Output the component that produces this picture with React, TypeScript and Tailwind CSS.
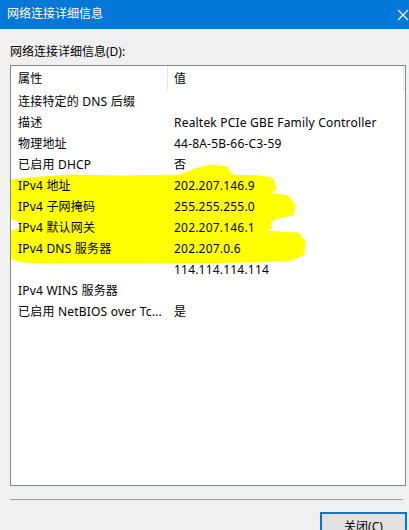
import React from "react";

const font = { fontFamily: '"Noto Sans", "Noto Sans CJK SC", sans-serif' };

const rows: [string, string][] = [
  ["连接特定的 DNS 后缀", ""],
  ["描述", "Realtek PCIe GBE Family Controller"],
  ["物理地址", "44-8A-5B-66-C3-59"],
  ["已启用 DHCP", "否"],
  ["IPv4 地址", "202.207.146.9"],
  ["IPv4 子网掩码", "255.255.255.0"],
  ["IPv4 默认网关", "202.207.146.1"],
  ["IPv4 DNS 服务器", "202.207.0.6"],
  ["", "114.114.114.114"],
  ["IPv4 WINS 服务器", ""],
  ["已启用 NetBIOS over Tc...", "是"],
];

// blob in page coords, converted to list-local (minus 11,66)
const pts: [number, number][] = [
  [11, 181], [40, 178], [70, 176], [120, 177], [180, 176], [198, 169], [212, 166], [226, 168], [232, 176],
  [260, 177], [272, 179], [275, 188], [268, 194], [288, 197], [294, 206], [292, 214], [278, 217], [270, 220],
  [270, 228], [262, 232], [298, 234], [304, 242], [303, 254], [292, 259], [260, 261], [150, 262], [60, 262],
  [24, 261], [11, 258], [11, 232], [22, 229], [24, 222], [11, 218],
];
const d =
  pts.map((p, i) => `${i === 0 ? "M" : "L"}${p[0] - 11} ${p[1] - 66}`).join(" ") + " Z";

export default function App() {
  return (
    <div
      className="w-[409px] h-[530px] bg-[#f0f0f0] overflow-hidden flex flex-col text-[12px] text-black"
      style={font}
    >
      <div className="h-[29px] bg-[#0078d7] flex items-center justify-between pl-[7px] text-white shrink-0">
        <span className="leading-none pb-[1px]">网络连接详细信息</span>
        <svg width="12" height="12" viewBox="0 0 12 12" className="mt-[1px]">
          <path d="M1 1 L11 11 M11 1 L1 11" stroke="white" strokeWidth="1.2" />
        </svg>
      </div>
      <div className="pl-[10px] pt-[15px] flex flex-col">
        <div className="h-[16px] leading-[16px]">网络连接详细信息(D):</div>
        <div className="mt-[5px] w-[396px] h-[421px] border border-[#828790] bg-white relative overflow-hidden">
          <svg
            className="absolute left-0 top-0 pointer-events-none"
            width="394"
            height="419"
          >
            <path d={d} fill="#ffff00" stroke="#ffff00" strokeWidth="3" strokeLinejoin="round" />
          </svg>
          <div className="relative flex flex-col tracking-[0.2px]">
            <div className="h-[25px] flex items-center">
              <div className="w-[156px] pl-[7px] h-full flex items-center">属性</div>
              <div className="w-px h-full bg-[#e5e5e5]" />
              <div className="w-[235px] pl-[6px] h-full flex items-center">值</div>
              <div className="w-px h-full bg-[#e5e5e5]" />
            </div>
            {rows.map(([k, v], i) => (
              <div key={i} className="h-[21px] flex items-center whitespace-nowrap">
                <div className="w-[157px] pl-[7px]">{k}</div>
                <div className="pl-[6px]">{v}</div>
              </div>
            ))}
          </div>
        </div>
        <div className="mt-[13px] w-[393px] h-px bg-[#a0a0a0]" />
        <div className="mt-[12px] flex justify-end pr-[2px]">
          <div className="w-[87px] h-[30px] border-2 border-[#0078d7] bg-[#e1e1e1] flex items-center justify-center">
            关闭(C)
          </div>
        </div>
      </div>
    </div>
  );
}
